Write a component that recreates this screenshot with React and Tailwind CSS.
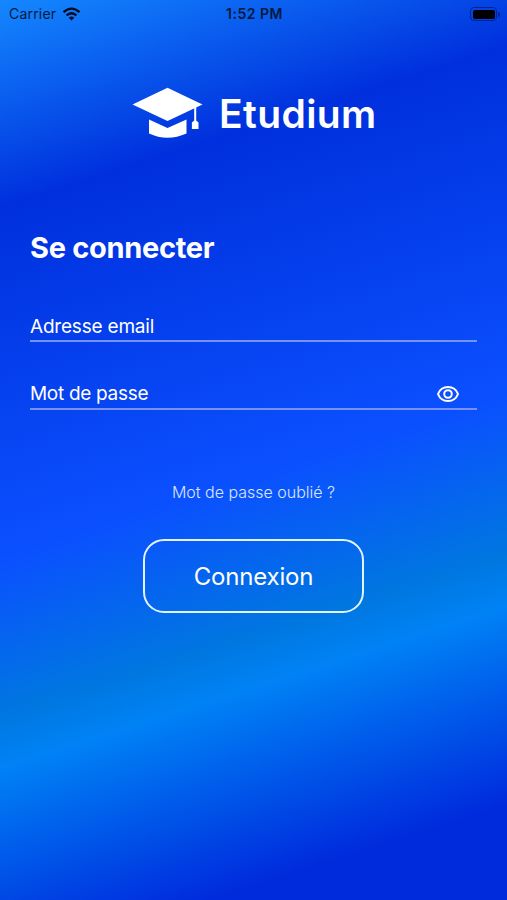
function StatusBar() {
  return (
    <header className="grid h-7 grid-cols-3 items-center pl-[9px] pr-[7px] text-[14px] leading-7 text-[#031a3c]">
      <div className="flex items-center gap-[6px]">
        <span className="tracking-[0.2px]">Carrier</span>
        <svg width="19" height="14" viewBox="0 0 18 14" fill="none" stroke="#020c20" strokeWidth="2.3" aria-hidden="true">
          <path d="M1 5.2Q9-2 17 5.2" />
          <path d="M4 8.4Q9 4 14 8.4" />
          <path d="M6.2 10.7Q9 8.3 11.8 10.7L9 13.6Z" fill="#020c20" stroke="none" />
        </svg>
      </div>
      <span className="text-center text-[14px] font-semibold tracking-[0.5px]">1:52 PM</span>
      <div className="flex items-center justify-end gap-px">
        <div className="h-[14px] w-[27px] rounded-[4px] border border-[#032293] p-[1.5px]">
          <div className="h-full rounded-[2px] bg-black" />
        </div>
        <div className="h-[5px] w-[2px] rounded-r-full bg-[#032293]" />
      </div>
    </header>
  );
}

function Logo() {
  return (
    <div className="mt-[59px] flex h-[52px] pl-[132px]">
      <svg width="71" height="52" viewBox="0 0 71 52" fill="white" aria-hidden="true">
        <path d="M.5 17.500 35.500.7 70.500 17.500 35.500 34Z" />
        <path d="M17 32.500 35.500 41 54.500 32.500V46.500Q45 50.700 35.500 50.700T17 46.500Z" />
        <path d="M62.200 19h2v14.500l2.300 2v6.500h-6.600v-6.500l2.300-2Z" />
      </svg>
      <span className="ml-[16px] mt-[3px] text-[39px] font-semibold leading-[48px] tracking-[0.4px]">Etudium</span>
    </div>
  );
}

function EyeIcon() {
  return (
    <svg width="24" height="18" viewBox="0 0 24 18" fill="none" stroke="white" strokeWidth="2" aria-hidden="true">
      <path d="M2 9C3.700 4.600 7.400 2 12 2s8.300 2.600 10 7C20.300 13.400 16.600 16 12 16S3.700 13.400 2 9Z" />
      <circle cx="12" cy="9" r="3.8" />
    </svg>
  );
}

export default function App() {
  return (
    <main className="flex h-[900px] w-full flex-col bg-[linear-gradient(162.300deg,#1488ff_0%,#0030dd_19.500%,#0b50ff_52.500%,#0077e0_67.500%,#0082f5_72.300%,#002bdd_91%,#002bdd_100%)] font-['Inter',sans-serif] text-white">
      <StatusBar />
      <Logo />
      <form className="flex flex-col px-[30px]">
        <h1 className="mt-[89px] text-[29px] font-bold leading-[40px] tracking-[-0.3px]">Se connecter</h1>
        <div className="mt-[44px] flex h-[30px] items-center border-b-2 border-[#7593fb]">
          <span className="mt-[2px] text-[19px] tracking-[-0.2px]">Adresse email</span>
        </div>
        <div className="mt-[38px] flex h-[30px] items-center justify-between border-b-2 border-[#7593fb] pr-[17px]">
          <span className="text-[19px] tracking-[-0.3px]">Mot de passe</span>
          <EyeIcon />
        </div>
        <a className="mt-[70px] text-center text-[16px] font-light leading-[24px] text-[#dbe6ff]">Mot de passe oublié ?</a>
        <button type="button" className="mt-[35px] h-[74px] w-[221px] self-center rounded-[21px] border-2 border-[#e3f2ff] pt-[2px] text-[24px] tracking-[-0.2px]">
          Connexion
        </button>
      </form>
    </main>
  );
}
